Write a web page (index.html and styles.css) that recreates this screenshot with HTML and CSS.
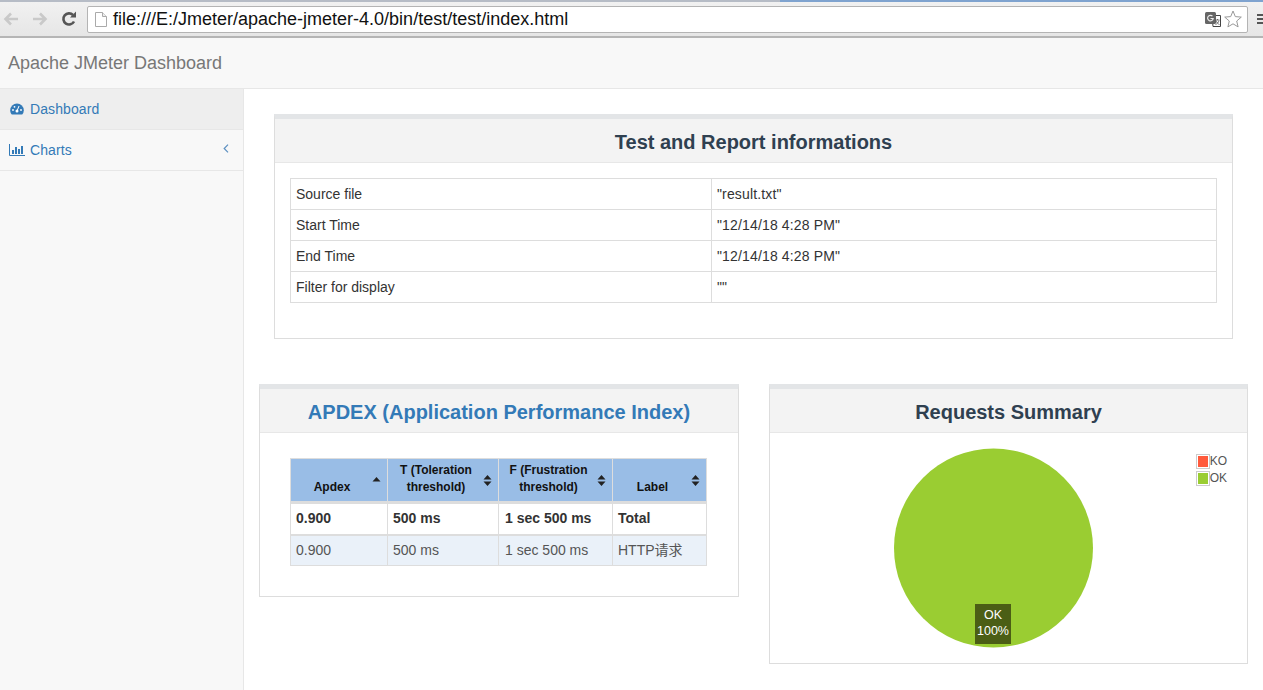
FILE: index.html
```html
<!DOCTYPE html>
<html lang="en">
<head>
<meta charset="utf-8">
<title>Apache JMeter Dashboard</title>
<link rel="stylesheet" href="styles.css">
</head>
<body>
<div class="tabstrip"><span class="tab-a"></span><span class="tab-b"></span><span class="tab-c"></span></div>
<div class="toolbar">
  <svg class="tool-ic" width="18" height="18" viewBox="0 0 18 18"><path d="M16 9H4M9 3.500L3.500 9 9 14.500" fill="none" stroke="#c9c9c9" stroke-width="2.600"/></svg>
  <svg class="tool-ic fwd" width="18" height="18" viewBox="0 0 18 18"><path d="M2 9h12M9 3.500L14.500 9 9 14.500" fill="none" stroke="#c9c9c9" stroke-width="2.600"/></svg>
  <svg class="tool-ic reload" width="18" height="18" viewBox="0 0 18 18"><path d="M14 11.500A5.600 5.600 0 1 1 13 5" fill="none" stroke="#555" stroke-width="2.600"/><path d="M10 7.500h6v-6z" fill="#555"/></svg>
  <div class="omnibox">
    <svg class="file-ic" width="12" height="15" viewBox="0 0 12 15"><path d="M.5.500h7l4 4v10H.5z" fill="#fff" stroke="#aaa"/><path d="M7.500.500v4h4" fill="#eee" stroke="#aaa"/></svg>
    <span class="url">file:///E:/Jmeter/apache-jmeter-4.0/bin/test/test/index.html</span>
    <svg class="translate-ic" width="16" height="16" viewBox="0 0 16 16"><path d="M7 4.500h8.500v11H8z" fill="#fff" stroke="#444"/><rect y="1" width="11" height="12" rx="1.500" fill="#666"/><path d="M7.500 5.200A2.800 2.800 0 1 0 8.200 7.500H5.500" fill="none" stroke="#eee" stroke-width="1.200"/><path d="M10.500 9h4M12.500 8v1M11 9.500c.5 2 2 3.500 3.500 4M14 9.500c-.5 2-2 3.500-3.500 4" stroke="#555" stroke-width=".8" fill="none"/></svg>
    <svg class="star-ic" width="18" height="18" viewBox="0 0 18 18"><path d="M9 1l2.300 5.600 6 .5-4.600 3.900 1.400 5.900L9 13.800 3.900 16.900l1.400-5.900L.7 7.100l6-.5z" fill="#fff" stroke="#999"/></svg>
  </div>
  <div class="menu-ic"><i></i><i></i><i></i></div>
</div>
<header class="navbar"><span class="brand">Apache JMeter Dashboard</span></header>
<div class="layout">
  <nav class="sidebar">
    <a class="side-item active">
      <svg class="dash-ic" width="14" height="12" viewBox="0 0 14 12"><path d="M7 .500A6.800 6.800 0 0 0 .2 7.300c0 1.700.6 3.200 1.600 4.300h10.400a6.600 6.600 0 0 0 1.600-4.300A6.800 6.800 0 0 0 7 .500z" fill="#337ab7"/><circle cx="7" cy="8" r="1.500" fill="#fff"/><path d="M7 8l2-5" stroke="#fff"/><circle cx="3" cy="7" r=".9" fill="#fff"/><circle cx="4.500" cy="3.800" r=".9" fill="#fff"/><circle cx="11" cy="7" r=".9" fill="#fff"/></svg>
      <span class="side-text">Dashboard</span>
    </a>
    <a class="side-item">
      <svg class="chart-ic" width="16" height="12" viewBox="0 0 16 12"><path d="M.5 0v11.500H16" fill="none" stroke="#337ab7"/><path d="M3 6h2v4H3zM6 3h2v7H6zM9 5h2v5H9zM12 2h2v8h-2z" fill="#337ab7"/></svg>
      <span class="side-text">Charts</span>
      <svg class="chev" width="6" height="9" viewBox="0 0 6 9"><path d="M5 .700L1.200 4.500 5 8.300" fill="none" stroke="#5b8fc0" stroke-width="1.200"/></svg>
    </a>
  </nav>
  <main class="content">
    <section class="panel info-panel">
      <h2 class="panel-title">Test and Report informations</h2>
      <div class="info-body">
        <table class="info-table">
          <tr><td class="c-key">Source file</td><td class="c-val">"result.txt"</td></tr>
          <tr><td class="c-key">Start Time</td><td class="c-val">"12/14/18 4:28 PM"</td></tr>
          <tr><td class="c-key">End Time</td><td class="c-val">"12/14/18 4:28 PM"</td></tr>
          <tr><td class="c-key">Filter for display</td><td class="c-val">""</td></tr>
        </table>
      </div>
    </section>
    <div class="row">
      <section class="panel apdex-panel">
        <h2 class="panel-title link">APDEX (Application Performance Index)</h2>
        <div class="apdex-body">
          <table class="apdex-table">
            <thead>
              <tr>
                <th class="col-1">Apdex<svg class="sort" width="9" height="11" viewBox="0 0 9 11"><path d="M4.500 2L8.500 6.500H.5z" fill="#222"/></svg></th>
                <th class="col-2">T (Toleration threshold)<svg class="sort" width="9" height="11" viewBox="0 0 9 11"><path d="M4.500 0L8.500 4.500H.5zM4.500 11L8.500 6.500H.5z" fill="#222"/></svg></th>
                <th class="col-3">F (Frustration threshold)<svg class="sort" width="9" height="11" viewBox="0 0 9 11"><path d="M4.500 0L8.500 4.500H.5zM4.500 11L8.500 6.500H.5z" fill="#222"/></svg></th>
                <th class="col-4">Label<svg class="sort" width="9" height="11" viewBox="0 0 9 11"><path d="M4.500 0L8.500 4.500H.5zM4.500 11L8.500 6.500H.5z" fill="#222"/></svg></th>
              </tr>
            </thead>
            <tbody>
              <tr class="total"><td>0.900</td><td>500 ms</td><td>1 sec 500 ms</td><td>Total</td></tr>
              <tr class="odd"><td>0.900</td><td>500 ms</td><td>1 sec 500 ms</td><td>HTTP请求</td></tr>
            </tbody>
          </table>
        </div>
      </section>
      <section class="panel summary-panel">
        <h2 class="panel-title">Requests Summary</h2>
        <div class="pie-body">
          <svg class="pie" width="201" height="200" viewBox="0 0 201 200"><circle cx="100.500" cy="100" r="99.500" fill="#9acd32"/></svg>
          <div class="pie-label">OK<br>100%</div>
          <div class="legend">
            <div class="legend-row"><span class="swatch"><i class="ko"></i></span>KO</div>
            <div class="legend-row"><span class="swatch"><i class="ok"></i></span>OK</div>
          </div>
        </div>
      </section>
    </div>
  </main>
</div>
</body>
</html>
```
FILE: styles.css
```css
* { box-sizing: border-box; }
html, body { margin: 0; height: 690px; overflow: hidden; }
body { font-family: "Liberation Sans", Arial, "Noto Sans CJK SC", sans-serif; font-size: 14px; color: #333; background: #fff; line-height: 20px; }

.tabstrip { height: 2px; background: #b6bcc6; display: flex; }
.tab-a { width: 200px; }
.tab-b { width: 580px; }
.tab-c { flex: 1; background: #7fa3cf; }

.toolbar { height: 36px; display: flex; align-items: center; padding: 0 0 0 2px; background: linear-gradient(#f1f1f1, #e6e6e6); border-bottom: 2px solid #b5b5b5; }
.tool-ic { flex: none; }
.fwd { margin-left: 11px; }
.reload { margin-left: 11px; }
.omnibox { margin-left: 9px; width: 1161px; height: 27px; background: #fff; border: 1px solid #b4b4b4; border-radius: 2px; display: flex; align-items: center; padding: 0 5px 0 7px; }
.file-ic { flex: none; }
.url { margin-left: 6px; font-size: 18px; color: #111; flex: 1; white-space: nowrap; line-height: 25px; }
.translate-ic { flex: none; margin-right: 3px; }
.star-ic { flex: none; }
.menu-ic { margin-left: 9px; width: 6px; display: flex; flex-direction: column; gap: 2px; }
.menu-ic i { display: block; height: 2px; background: #555; }

.navbar { height: 51px; background: #f8f8f8; border-bottom: 1px solid #e7e7e7; display: flex; align-items: center; padding: 0 8px 1px; }
.brand { font-size: 18px; color: #777; }

.layout { display: flex; height: 601px; }
.sidebar { width: 244px; flex: none; background: #f8f8f8; border-right: 1px solid #e7e7e7; }
.side-item { height: 41px; display: flex; align-items: center; padding: 0 10px 0 9px; color: #337ab7; border-bottom: 1px solid #e7e7e7; }
.side-item.active { background: #eee; padding-left: 10px; }
.dash-ic { margin-right: 6px; flex: none; }
.chart-ic { margin-right: 5px; flex: none; }
.side-text { flex: 1; letter-spacing: .1px; }
.chev { margin: 0 4px 4px 0; }

.content { flex: 1; padding: 25px 15px 0; min-width: 0; }
.panel { background: #fff; border: 1px solid #ddd; border-top: 5px solid #e3e5e7; }
.panel-title { margin: 0; height: 44px; padding-top: 2px; background: #f3f3f3; border-bottom: 1px solid #e7e7e7; text-align: center; font-size: 20px; font-weight: 700; color: #2f4050; line-height: 43px; }
.panel-title.link { color: #337ab7; }

.info-panel { margin: 0 15px; height: 225px; }
.info-body { padding: 15px; }
.info-table { width: 100%; border-collapse: collapse; }
.info-table td { height: 31px; padding: 0 5px; border: 1px solid #ddd; }
.c-key { width: 421px; }
.c-val { letter-spacing: .15px; }

.row { display: flex; justify-content: space-between; margin-top: 45px; }
.apdex-panel { width: 480px; height: 213px; }
.apdex-body { padding: 25px 31px 0 30px; }
.apdex-table { width: 417px; border-collapse: collapse; table-layout: fixed; font-size: 14px; }
.apdex-table th { position: relative; height: 44px; padding: 0 22px 5px 8px; background: #99bde6; border: 1px solid #ddd; border-bottom: 3px solid #ddd; font-size: 12px; line-height: 17px; color: #111; text-align: center; vertical-align: bottom; font-weight: 700; }
.col-1 { width: 97px; }
.col-2 { width: 111px; }
.col-3 { width: 114px; }
.col-4 { width: 94px; }
.sort { position: absolute; right: 6px; top: 16px; }
.apdex-table td { height: 31px; padding: 0 5px; border: 1px solid #ddd; }
.apdex-table td:nth-child(3) { padding-left: 6px; }
.total td { font-weight: 700; height: 32px; padding-bottom: 2px; }
.odd td { background: #eaf1f9; color: #555; border-top-width: 2px; }

.summary-panel { width: 479px; height: 280px; }
.pie-body { position: relative; height: 230px; padding: 15px 0 0 123px; }
.pie { display: block; }
.pie-label { position: absolute; left: 205px; top: 171px; width: 36px; height: 40px; background: #4b5e15; color: #fff; font-size: 12.5px; line-height: 16px; padding-top: 3px; text-align: center; }
.legend { position: absolute; right: 20px; top: 20px; font-size: 12px; line-height: 17px; color: #545454; }
.legend-row { display: flex; align-items: center; }
.swatch { width: 14px; height: 15px; border: 1px solid #ccc; padding: 1px; display: block; }
.swatch i { display: block; width: 100%; height: 100%; }
.ko { background: #ff5a3c; }
.ok { background: #9acd32; }
```
